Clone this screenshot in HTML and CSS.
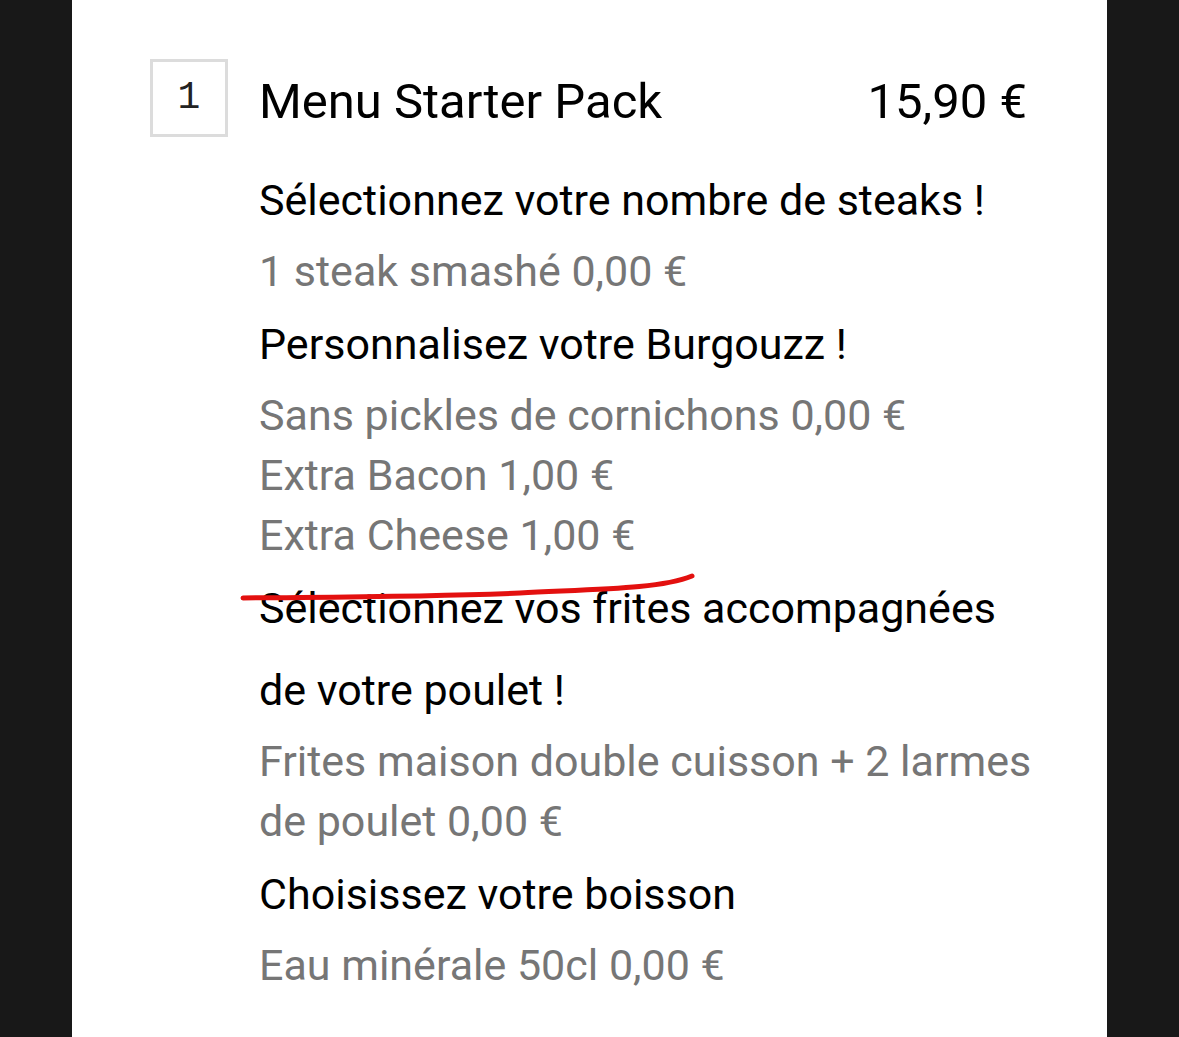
FILE: index.html
```html
<!DOCTYPE html>
<html lang="fr">
<head>
  <meta charset="UTF-8" />
  <meta name="viewport" content="width=device-width, initial-scale=1.0"/>
  <title>Panier</title>
  <link rel="stylesheet" href="styles.css">
</head>
<body>

  <div class="carte">
    <div class="ligne-titre">
      <div class="quantite">1</div>
      <div class="nom">Menu Starter Pack</div>
      <div class="prix">15,90 €</div>
    </div>

    <div class="details">
      <div class="question">Sélectionnez votre nombre de steaks !</div>
      <div class="choix">1 steak smashé 0,00 €</div>

      <div class="question">Personnalisez votre Burgouzz !</div>
      <div class="choix">Sans pickles de cornichons 0,00 €</div>
      <div class="choix">Extra Bacon 1,00 €</div>
      <div class="choix">Extra Cheese 1,00 €</div>

      <div class="question">Sélectionnez vos frites accompagnées de votre poulet !</div>
      <div class="choix">Frites maison double cuisson + 2 larmes de poulet 0,00 €</div>

      <div class="question">Choisissez votre boisson</div>
      <div class="choix">Eau minérale 50cl 0,00 €</div>

      <svg class="trait" width="460" height="30" viewBox="0 0 460 30">
        <path d="M3 25 C 80 24, 180 24, 280 20 C 360 16, 420 16, 452 3" fill="none" stroke="#e3100f" stroke-width="5" stroke-linecap="round"/>
      </svg>
    </div>
  </div>

</body>
</html>
```

FILE: styles.css
```css
body {
  margin: 0;
  background: #181818;
  font-family: Roboto, "Liberation Sans", sans-serif;
}
.carte {
  margin-left: 72px;
  width: 1035px;
  min-height: 1037px;
  background: #fff;
  padding: 59px 80px 0 78px;
  box-sizing: border-box;
}
.ligne-titre {
  display: flex;
  align-items: flex-start;
}
.quantite {
  width: 72px;
  height: 72px;
  border: 3px solid #dcdcdc;
  font-family: "Liberation Mono", monospace;
  font-size: 38px;
  line-height: 72px;
  text-align: center;
  color: #222;
  flex-shrink: 0;
}
.nom {
  margin-left: 31px;
  flex: 1;
  font-size: 49px;
  line-height: 78px;
  padding-top: 4px;
  color: #000;
}
.prix {
  font-size: 49px;
  line-height: 78px;
  padding-top: 4px;
  color: #000;
}
.details {
  position: relative;
  margin-left: 109px;
  margin-top: 18px;
  width: 775px;
}
.question {
  font-size: 43px;
  line-height: 82px;
  color: #000;
}
.choix + .question {
  margin-top: 2px;
}
.choix {
  font-size: 43px;
  line-height: 60px;
  color: #767676;
}
.trait {
  position: absolute;
  left: -19px;
  top: 414px;
}
```
